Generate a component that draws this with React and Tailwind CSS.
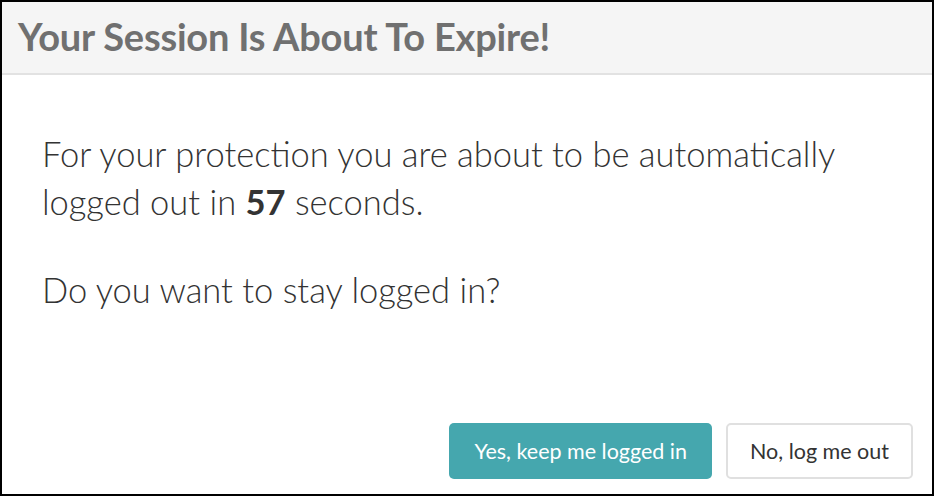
export default function App() {
  const seconds = 57;

  return (
    <div className="w-[934px] h-[496px] border-2 border-black bg-white flex flex-col font-['Lato','Liberation_Sans',sans-serif]">
      <div className="h-[73px] bg-[#f5f5f5] border-b-2 border-[#e2e2e2] flex items-center px-[16px] pb-[2px]">
        <h1 className="text-[38px] font-bold text-[#707070] tracking-[-0.2px]">
          Your Session Is About To Expire!
        </h1>
      </div>
      <div className="flex-1 flex flex-col px-[40px] pt-[55px] text-[#333333]">
        <p className="text-[34.5px] font-light leading-[48px]">
          For your protection you are about to be automatically logged out in{" "}
          <strong className="font-bold">{seconds}</strong> seconds.
        </p>
        <p className="text-[34.5px] font-light leading-[48px] mt-[40px]">
          Do you want to stay logged in?
        </p>
      </div>
      <div className="flex justify-end gap-[14px] pb-[15px] pr-[19px]">
        <button className="h-[56px] px-[25px] rounded-[5px] bg-[#45a7ae] text-white text-[21.5px]">
          Yes, keep me logged in
        </button>
        <button className="h-[56px] px-[22px] rounded-[5px] bg-white border-2 border-[#e0e0e0] text-[#333333] text-[21.5px]">
          No, log me out
        </button>
      </div>
    </div>
  );
}
